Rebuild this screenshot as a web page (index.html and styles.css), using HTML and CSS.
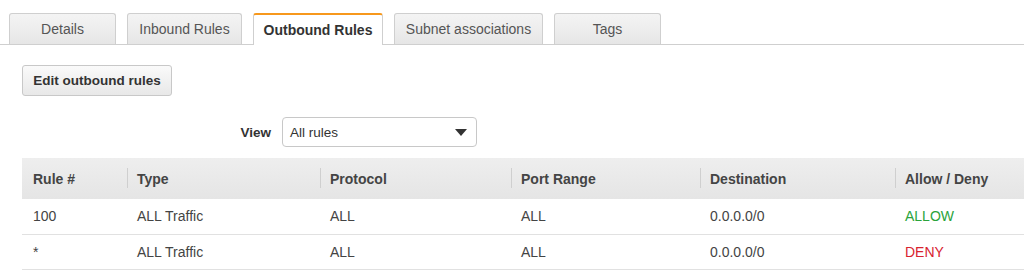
FILE: index.html
```html
<!DOCTYPE html>
<html>
<head>
<meta charset="utf-8">
<link rel="stylesheet" href="styles.css">
</head>
<body>
<div class="tabs">
  <div class="tab t-details">Details</div>
  <div class="tab t-inbound">Inbound Rules</div>
  <div class="tab t-outbound active">Outbound Rules</div>
  <div class="tab t-subnet">Subnet associations</div>
  <div class="tab t-tags">Tags</div>
</div>
<div class="content">
  <button class="btn">Edit outbound rules</button>
  <div class="view-row">
    <label class="view-label">View</label>
    <div class="select">
      <span>All rules</span>
      <svg class="caret" width="12" height="7" viewBox="0 0 12 7"><path d="M0 0H12L6 7Z" fill="#333"/></svg>
    </div>
  </div>
</div>
<table class="rules">
  <thead>
    <tr>
      <th class="c1">Rule #</th>
      <th class="c2 sep">Type</th>
      <th class="c3 sep">Protocol</th>
      <th class="c4 sep">Port Range</th>
      <th class="c5 sep">Destination</th>
      <th class="c6 sep">Allow / Deny</th>
    </tr>
  </thead>
  <tbody>
    <tr>
      <td>100</td><td>ALL Traffic</td><td>ALL</td><td>ALL</td><td>0.0.0.0/0</td><td class="allow">ALLOW</td>
    </tr>
    <tr>
      <td>*</td><td>ALL Traffic</td><td>ALL</td><td>ALL</td><td>0.0.0.0/0</td><td class="deny">DENY</td>
    </tr>
  </tbody>
</table>
</body>
</html>
```
FILE: styles.css
```css
html, body {
  margin: 0;
  padding: 0;
  background: #fff;
  font-family: "Liberation Sans", Arial, sans-serif;
  color: #444;
  overflow: hidden;
}
.tabs {
  display: flex;
  gap: 11px;
  padding: 13px 0 0 9px;
  height: 31px;
  border-bottom: 1px solid #cfcfcf;
  box-sizing: content-box;
}
.tab {
  box-sizing: border-box;
  height: 31px;
  border: 1px solid #cfcfcf;
  border-bottom: none;
  border-radius: 3px 3px 0 0;
  background: linear-gradient(#f4f4f4, #e6e6e6);
  color: #555;
  font-size: 14px;
  line-height: 31px;
  text-align: center;
}
.t-details { width: 107px; }
.t-inbound { width: 115px; }
.t-outbound { width: 130px; }
.t-subnet { width: 149px; }
.t-tags { width: 107px; }
.tab.active {
  height: 32px;
  background: #fff;
  border-top: 2px solid #f7981c;
  color: #333;
  font-weight: bold;
  line-height: 30px;
  position: relative;
  z-index: 1;
}
.content {
  padding: 20px 0 0 22px;
}
.btn {
  display: block;
  box-sizing: border-box;
  width: 150px;
  height: 31px;
  border: 1px solid #c8c8c8;
  border-radius: 3px;
  background: linear-gradient(#fafafa, #e8e8e8);
  font-family: inherit;
  font-size: 13.5px;
  font-weight: bold;
  color: #333;
  padding: 0;
}
.view-row {
  display: flex;
  align-items: center;
  gap: 11px;
  margin-top: 21px;
}
.view-label {
  width: 249px;
  text-align: right;
  font-size: 13.5px;
  font-weight: bold;
  color: #333;
}
.select {
  box-sizing: border-box;
  width: 195px;
  height: 30px;
  border: 1px solid #c8c8c8;
  border-radius: 4px;
  display: flex;
  align-items: center;
  justify-content: space-between;
  padding: 0 9px 0 7px;
  font-size: 13.5px;
  color: #333;
}
.caret { display: block; }
.rules {
  margin: 11px 0 0 22px;
  border-collapse: collapse;
  table-layout: fixed;
  width: 1040px;
  font-size: 14px;
}
.rules th {
  height: 41px;
  padding: 0 0 0 10px;
  text-align: left;
  font-weight: bold;
  color: #444;
  background: linear-gradient(#eeeeee, #e5e5e5);
  position: relative;
  box-sizing: border-box;
}
.rules th.c1 { padding-left: 11px; width: 105px; }
.c2 { width: 193px; }
.c3 { width: 191px; }
.c4 { width: 189px; }
.c5 { width: 195px; }
.rules th.sep::before {
  content: "";
  position: absolute;
  left: 0;
  top: 10px;
  height: 20px;
  border-left: 1px solid #cfcfcf;
}
.rules td {
  height: 35px;
  box-sizing: border-box;
  padding: 0 0 0 10px;
  border-bottom: 1px solid #e1e1e1;
  color: #444;
}
.rules td:first-child { padding-left: 11px; }
.allow { color: #2aa33b !important; }
.deny { color: #d8232f !important; }
```
